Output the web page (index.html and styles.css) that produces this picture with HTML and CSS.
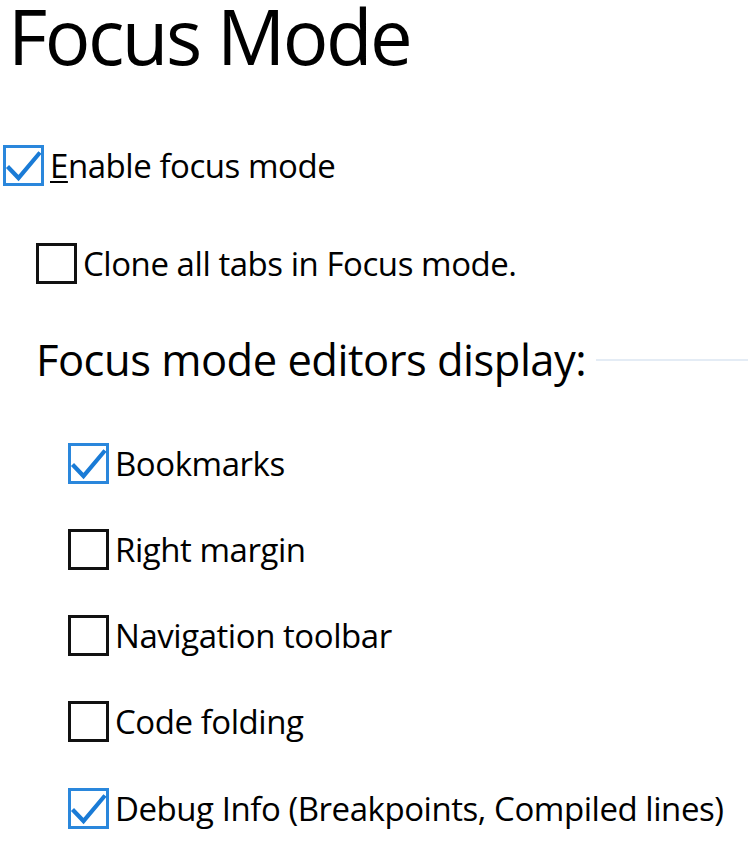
FILE: index.html
```html
<!DOCTYPE html>
<html lang="en">
<head>
<meta charset="utf-8">
<title>Focus Mode</title>
<link rel="stylesheet" href="styles.css">
</head>
<body>
<main class="page">
  <h1 class="title">Focus Mode</h1>

  <div class="option level0 first">
    <span class="cb checked"><svg viewBox="0 0 41 41" width="41" height="41"><path d="M4.5 21.5 L15.5 33 L37 7.5" /></svg></span>
    <span class="label"><u class="key">E</u>nable focus mode</span>
  </div>

  <div class="option level1 second">
    <span class="cb"></span>
    <span class="label">Clone all tabs in Focus mode.</span>
  </div>

  <div class="group-head">
    <span class="group-title">Focus mode editors display:</span>
    <span class="group-rule"></span>
  </div>

  <div class="group-items">
    <div class="option level2">
      <span class="cb checked"><svg viewBox="0 0 41 41" width="41" height="41"><path d="M4.5 21.5 L15.5 33 L37 7.5" /></svg></span>
      <span class="label">Bookmarks</span>
    </div>
    <div class="option level2">
      <span class="cb"></span>
      <span class="label">Right margin</span>
    </div>
    <div class="option level2">
      <span class="cb"></span>
      <span class="label">Navigation toolbar</span>
    </div>
    <div class="option level2">
      <span class="cb"></span>
      <span class="label">Code folding</span>
    </div>
    <div class="option level2">
      <span class="cb checked"><svg viewBox="0 0 41 41" width="41" height="41"><path d="M4.5 21.5 L15.5 33 L37 7.5" /></svg></span>
      <span class="label">Debug Info (Breakpoints, Compiled lines)</span>
    </div>
  </div>
</main>
</body>
</html>
```

FILE: styles.css
```css
html, body {
  margin: 0;
  padding: 0;
  background: #ffffff;
}

body {
  font-family: "Open Sans", "Noto Sans", "DejaVu Sans", sans-serif;
  color: #000000;
  overflow: hidden;
}

.page {
  display: flex;
  flex-direction: column;
  padding: 0 0 0 3px;
}

.title {
  margin: -16px 0 0 5px;
  font-size: 76px;
  font-weight: 400;
  letter-spacing: -2.5px;
  line-height: normal;
  white-space: nowrap;
}

.option {
  display: flex;
  align-items: center;
  gap: 6px;
  height: 41px;
}

.first {
  margin-top: 57.5px;
}

.second {
  margin-top: 57px;
}

.level1 {
  margin-left: 33px;
}

.level2 {
  margin-left: 65px;
}

.cb {
  box-sizing: border-box;
  flex: 0 0 41px;
  width: 41px;
  height: 41px;
  border: 3px solid #111111;
  background: #ffffff;
  position: relative;
}

.cb.checked {
  border-color: #2a87dc;
}

.cb svg {
  position: absolute;
  left: -3px;
  top: -3px;
}

.cb svg path {
  fill: none;
  stroke: #1a7bd6;
  stroke-width: 4.2;
  stroke-linecap: butt;
  stroke-linejoin: miter;
}

.label {
  font-size: 33px;
  letter-spacing: -0.45px;
  line-height: 41px;
  white-space: nowrap;
}

.key {
  text-decoration: underline;
  text-decoration-thickness: 2px;
  text-underline-offset: 3px;
}

.group-head {
  display: flex;
  align-items: center;
  margin-top: 54px;
  margin-left: 33px;
  height: 44px;
}

.group-title {
  font-size: 43.5px;
  letter-spacing: -0.5px;
  line-height: 44px;
  white-space: nowrap;
}

.group-rule {
  flex: 1 1 auto;
  height: 2px;
  margin-left: 10px;
  background: #e4ecf5;
}

.group-items {
  display: flex;
  flex-direction: column;
  gap: 45.25px;
  margin-top: 61px;
}
```
